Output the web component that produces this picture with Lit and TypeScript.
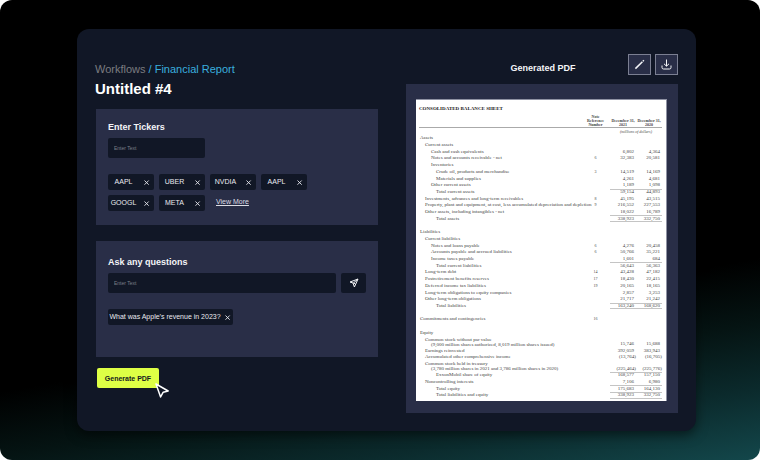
import { LitElement, html, css, svg, nothing } from "lit";
import { customElement, property } from "lit/decorators.js";
import { classMap } from "lit/directives/class-map.js";

interface Row {
  label?: string;
  detail?: string;
  level?: number;
  note?: string;
  a?: string;
  b?: string;
  rule?: "top" | "both";
}

const rows: Row[] = [
  { label: "Assets" },
  { label: "Current assets", level: 1 },
  { label: "Cash and cash equivalents", level: 2, a: "6,802", b: "4,364" },
  { label: "Notes and accounts receivable - net", level: 2, note: "6", a: "32,383", b: "20,581" },
  { label: "Inventories", level: 2 },
  { label: "Crude oil, products and merchandise", level: 3, note: "3", a: "14,519", b: "14,169" },
  { label: "Materials and supplies", level: 3, a: "4,261", b: "4,681" },
  { label: "Other current assets", level: 2, a: "1,189", b: "1,098" },
  { label: "Total current assets", level: 3, a: "59,154", b: "44,893", rule: "top" },
  { label: "Investments, advances and long-term receivables", level: 1, note: "8", a: "45,195", b: "43,515" },
  { label: "Property, plant and equipment, at cost, less accumulated depreciation and depletion", level: 1, note: "9", a: "216,552", b: "227,553" },
  { label: "Other assets, including intangibles - net", level: 1, a: "18,022", b: "16,789" },
  { label: "Total assets", level: 3, a: "338,923", b: "332,750", rule: "both" },
  {},
  { label: "Liabilities" },
  { label: "Current liabilities", level: 1 },
  { label: "Notes and loans payable", level: 2, note: "6", a: "4,276", b: "20,458" },
  { label: "Accounts payable and accrued liabilities", level: 2, note: "6", a: "50,766", b: "35,221" },
  { label: "Income taxes payable", level: 2, a: "1,601", b: "684" },
  { label: "Total current liabilities", level: 3, a: "56,643", b: "56,363", rule: "top" },
  { label: "Long-term debt", level: 1, note: "14", a: "43,428", b: "47,182" },
  { label: "Postretirement benefits reserves", level: 1, note: "17", a: "18,430", b: "22,415" },
  { label: "Deferred income tax liabilities", level: 1, note: "19", a: "20,165", b: "18,165" },
  { label: "Long-term obligations to equity companies", level: 1, a: "2,857", b: "3,253" },
  { label: "Other long-term obligations", level: 1, a: "21,717", b: "21,242" },
  { label: "Total liabilities", level: 3, a: "163,240", b: "168,620", rule: "both" },
  {},
  { label: "Commitments and contingencies", note: "16" },
  {},
  { label: "Equity" },
  { label: "Common stock without par value", detail: "(9,000 million shares authorized, 8,019 million shares issued)", level: 1, a: "15,746", b: "15,688" },
  { label: "Earnings reinvested", level: 1, a: "392,059", b: "383,943" },
  { label: "Accumulated other comprehensive income", level: 1, a: "(13,764)", b: "(16,705)" },
  { label: "Common stock held in treasury", detail: "(3,780 million shares in 2021 and 3,786 million shares in 2020)", level: 1, a: "(225,464)", b: "(225,776)" },
  { label: "ExxonMobil share of equity", level: 3, a: "168,577", b: "157,150", rule: "top" },
  { label: "Noncontrolling interests", level: 1, a: "7,106", b: "6,980" },
  { label: "Total equity", level: 3, a: "175,683", b: "164,130", rule: "top" },
  { label: "Total liabilities and equity", level: 3, a: "338,923", b: "332,750", rule: "both" },
];

@customElement("balance-sheet")
export class BalanceSheet extends LitElement {
  static styles = css`
    :host {
      display: block;
      box-sizing: border-box;
      padding: 6px 4px 2px 3px;
      border-top: 1px solid #8f92a3;
      border-right: 1px solid #8f92a3;
      background: #fff;
      color: #444;
      font: 5px/6px "Liberation Serif", serif;
    }
    h2 {
      margin: 0 0 3px;
      font-size: 5px;
      line-height: 6px;
      color: #222;
    }
    table {
      width: 100%;
      height: 284px;
      border-spacing: 0;
      table-layout: fixed;
    }
    th, td { padding: 0; font-weight: 400; }
    .note { width: 29px; text-align: center; }
    .year { width: 26px; }
    .heads th {
      height: 12px;
      font-size: 4px;
      font-weight: 700;
      line-height: 4px;
      vertical-align: bottom;
      text-align: center;
      border-bottom: 1px solid #aaa;
    }
    .units th { height: 7px; font-size: 4px; font-style: italic; }
    .label { text-align: left; white-space: nowrap; padding-left: 1px; }
    .l1 { padding-left: 6px; }
    .l2 { padding-left: 12px; }
    .l3 { padding-left: 17px; }
    .two { line-height: 5px; }
    .detail { display: block; padding-left: 6px; }
    .ref { font-size: 4px; text-align: center; }
    .num { text-align: right; padding-right: 2px; }
    .neg { padding-right: 0; }
    .two ~ .num { vertical-align: bottom; }
    .top .num { box-shadow: inset 0 1px #c4c4c4; }
    .both .num { box-shadow: inset 0 1px #c4c4c4, inset 0 -1px #c4c4c4; }
  `;

  private cell(value?: string) {
    return html`<td class=${classMap({ num: true, neg: !!value?.startsWith("(") })}>${value ?? nothing}</td>`;
  }

  render() {
    return html`
      <h2>CONSOLIDATED BALANCE SHEET</h2>
      <table>
        <thead>
          <tr class="heads">
            <th></th>
            <th class="note" scope="col">Note<br />Reference<br />Number</th>
            <th class="year" scope="col">December 31,<br />2021</th>
            <th class="year" scope="col">December 31,<br />2020</th>
          </tr>
          <tr class="units">
            <th></th>
            <th></th>
            <th colspan="2">(millions of dollars)</th>
          </tr>
        </thead>
        <tbody>
          ${rows.map(
            (r) => html`<tr class=${r.rule ?? ""}>
              <th scope="row" class=${classMap({ label: true, [`l${r.level ?? 0}`]: true, two: !!r.detail })}>
                ${r.label ?? html`&nbsp;`}${r.detail ? html`<span class="detail">${r.detail}</span>` : nothing}
              </th>
              <td class="ref">${r.note ?? nothing}</td>
              ${this.cell(r.a)}${this.cell(r.b)}
            </tr>`
          )}
        </tbody>
      </table>
    `;
  }
}

const cross = svg`<path d="M1.5 1.5 L5.7 5.7 M5.7 1.5 L1.5 5.7" fill="none" stroke="currentColor" stroke-width="0.9"/>`;

@customElement("tag-chip")
export class TagChip extends LitElement {
  @property() text = "";

  static styles = css`
    :host {
      display: inline-flex;
      align-items: center;
      box-sizing: border-box;
      height: 16px;
      border-radius: 2px;
      background: #111726;
      color: #e9eaf0;
      font: 7px/16px "Liberation Sans", sans-serif;
      white-space: nowrap;
    }
    .text { flex: 1; text-align: center; }
    button {
      display: flex;
      align-items: center;
      justify-content: center;
      width: var(--close-width, 15px);
      height: 16px;
      padding: 0;
      border: 0;
      background: none;
      color: inherit;
    }
    svg { width: 7px; height: 7px; }
  `;

  render() {
    return html`
      <span class="text">${this.text}</span>
      <button aria-label="Remove ${this.text}"><svg viewBox="0 0 7 7">${cross}</svg></button>
    `;
  }
}

@customElement("app-root")
export class AppRoot extends LitElement {
  static styles = css`
    :host {
      display: block;
      font-family: "Liberation Sans", Arial, sans-serif;
      color: #f4f5f8;
    }
    * { box-sizing: border-box; }
    h1, h2, p { margin: 0; }
    button, input { font-family: inherit; margin: 0; }
    .page {
      min-height: 100vh;
      padding: 29px 64px 29px 77px;
      border-radius: 12px;
      background: linear-gradient(170deg, #000 66%, #051413 77%, #0b2a2c 88%, #13474b 100%);
    }
    .window {
      display: grid;
      grid-template-columns: 282fr 272fr;
      column-gap: 28px;
      padding: 25px 18px 18px 19px;
      border-radius: 12px;
      background: #111726;
      box-shadow: 0 4px 12px rgb(0 0 0 / 50%);
    }
    .crumbs {
      margin-top: 8px;
      margin-left: -1px;
      font-size: 11px;
      line-height: 14px;
      color: #7b7c80;
    }
    .crumbs a { color: inherit; text-decoration: none; }
    .crumbs .here { color: #3aaedf; }
    h1 {
      margin: 4px 0 11px -1px;
      font-size: 15px;
      line-height: 18px;
      color: #fff;
    }
    .card {
      padding: 12px 12px 14px;
      background: #292e47;
    }
    .ask {
      margin-top: 16px;
      padding: 15px 12px 32px;
    }
    .title {
      display: block;
      margin-bottom: 5px;
      font-size: 9px;
      line-height: 12px;
      font-weight: 700;
    }
    input {
      display: block;
      height: 20px;
      padding: 0 6px;
      border: 0;
      border-radius: 2px;
      background: #111726;
      color: #e9eaf0;
      font-size: 5px;
    }
    input::placeholder { color: #7c7f89; opacity: 1; }
    .short { width: 97px; }
    .line { display: flex; gap: 5px; }
    .line input { flex: 1; min-width: 0; }
    .send {
      display: flex;
      align-items: center;
      justify-content: center;
      width: 25px;
      height: 20px;
      padding: 0;
      border: 0;
      border-radius: 2px;
      background: #111726;
      color: #f4f5f8;
    }
    .send svg { width: 10px; height: 10px; }
    .chips {
      display: grid;
      grid-template-columns: repeat(4, 46px);
      gap: 5px;
      margin-top: 16px;
    }
    .more {
      padding-left: 6px;
      font-size: 7px;
      line-height: 14px;
      color: #dcdde5;
      white-space: nowrap;
    }
    .asked {
      width: 125px;
      margin-top: 16px;
      --close-width: 11px;
    }
    .action {
      position: relative;
      width: 62px;
      margin: 11px 0 0 1px;
    }
    .generate {
      display: block;
      width: 100%;
      height: 20px;
      padding: 0;
      border: 0;
      border-radius: 2px;
      background: #deff45;
      color: #161b20;
      font-size: 7px;
      font-weight: 700;
      white-space: nowrap;
    }
    .pointer {
      position: absolute;
      left: 57px;
      top: 14px;
      width: 16px;
      height: 17px;
    }
    .bar {
      display: flex;
      align-items: flex-start;
      gap: 4px;
      height: 30px;
    }
    .bar h2 {
      flex: 1;
      padding: 8px 0 0 56px;
      font-size: 9px;
      line-height: 12px;
      text-align: center;
    }
    .tool {
      display: flex;
      align-items: center;
      justify-content: center;
      width: 23px;
      height: 21px;
      padding: 0;
      border: 1px solid #7b7f92;
      background: #292e47;
      color: #f4f5f8;
    }
    .tool svg { width: 13px; height: 13px; }
    .paper {
      padding: 15px 11px 12px 10px;
      background: #292e47;
    }
  `;

  private tickers = ["AAPL", "UBER", "NVDIA", "AAPL", "GOOGL", "META"];

  render() {
    return html`
      <main class="page">
        <div class="window">
          <section>
            <nav class="crumbs" aria-label="Breadcrumb">
              <a href="#workflows">Workflows</a> <a class="here" href="#report">/ Financial Report</a>
            </nav>
            <h1>Untitled #4</h1>
            <div class="card">
              <label class="title" for="tickers">Enter Tickers</label>
              <input id="tickers" class="short" type="text" placeholder="Enter Text" />
              <div class="chips">
                ${this.tickers.map((t) => html`<tag-chip .text=${t}></tag-chip>`)}
                <a class="more" href="#more">View More</a>
              </div>
            </div>
            <div class="card ask">
              <label class="title" for="question">Ask any questions</label>
              <div class="line">
                <input id="question" type="text" placeholder="Enter Text" />
                <button class="send" aria-label="Send">
                  <svg viewBox="0 0 10 10" fill="none" stroke="currentColor" stroke-width="1" stroke-linejoin="round">
                    <path d="M9 1 L1 4 L4 5 L5.4 9 Z M9 1 L4 5.4 M5 5 L6.4 6.2" />
                  </svg>
                </button>
              </div>
              <tag-chip class="asked" .text=${"What was Apple’s revenue in 2023?"}></tag-chip>
            </div>
            <div class="action">
              <button class="generate">Generate PDF</button>
              <svg class="pointer" viewBox="0 0 16 17" aria-hidden="true">
                <path d="M2 2 L14.2 9 L9.2 10.2 L6.6 15 Z" fill="#111726" stroke="#fff" stroke-width="1.5" stroke-linejoin="round" />
              </svg>
            </div>
          </section>
          <section>
            <div class="bar">
              <h2>Generated PDF</h2>
              <button class="tool" aria-label="Edit">
                <svg viewBox="0 0 13 13" fill="none" stroke="currentColor">
                  <path d="M2.4 10.6 L9.4 3.8 M9.9 3.3 L10.9 2.3" stroke-width="1.5" />
                </svg>
              </button>
              <button class="tool" aria-label="Download">
                <svg viewBox="0 0 13 13" fill="none" stroke="currentColor" stroke-width="1" stroke-linejoin="round">
                  <path d="M6.5 1.5 V8 M4 5.8 L6.5 8.2 L9 5.8" />
                  <path d="M2 7.5 V9.5 Q2 11 3.5 11 H9.5 Q11 11 11 9.5 V7.5" />
                </svg>
              </button>
            </div>
            <div class="paper"><balance-sheet></balance-sheet></div>
          </section>
        </div>
      </main>
    `;
  }
}
